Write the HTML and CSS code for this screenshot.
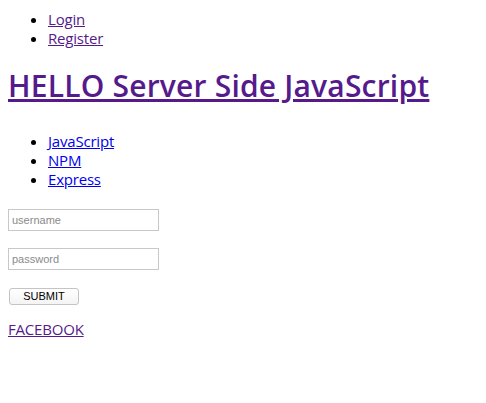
FILE: index.html
```html
<!DOCTYPE html>
<html lang="en">
<head>
<meta charset="utf-8">
<title>HELLO Server Side JavaScript</title>
<link rel="stylesheet" href="styles.css">
</head>
<body>
  <ul class="nav">
    <li><a class="visited" href="#login">Login</a></li>
    <li><a class="visited" href="#register">Register</a></li>
  </ul>
  <h1 class="title"><a class="visited" href="#home">HELLO Server Side JavaScript</a></h1>
  <ul class="topics">
    <li><a class="link" href="#js">JavaScript</a></li>
    <li><a class="link" href="#npm">NPM</a></li>
    <li><a class="link" href="#express">Express</a></li>
  </ul>
  <form class="login-form" onsubmit="return false">
    <input class="field" type="text" name="username" placeholder="username">
    <input class="field" type="password" name="password" placeholder="password">
    <button class="submit" type="submit">SUBMIT</button>
  </form>
  <a class="visited fb" href="#facebook">FACEBOOK</a>
</body>
</html>
```

FILE: styles.css
```css
html, body {
  background: #ffffff;
}

body {
  margin: 0;
  padding: 10px 8px 0 8px;
  font-family: "Open Sans", "Noto Sans", sans-serif;
  font-size: 15px;
  letter-spacing: -0.2px;
  color: #000000;
}

a {
  text-decoration: underline;
}

.visited {
  color: #551a8b;
}

.link {
  color: #0000ee;
}

.nav,
.topics {
  margin: 0;
  padding-left: 40px;
  list-style: disc;
  line-height: 19px;
}

.title {
  margin: 18.4px 0 0 0;
  font-size: 30px;
  font-weight: 600;
  line-height: 40px;
  letter-spacing: 0.2px;
}

.topics {
  margin-top: 25.8px;
}

.login-form {
  display: flex;
  flex-direction: column;
  align-items: flex-start;
  margin-top: 20px;
}

.field {
  box-sizing: border-box;
  width: 151px;
  height: 22px;
  margin: 0 0 17px 0;
  padding: 0 3px;
  border: 1px solid #c8c8c8;
  border-radius: 0;
  font-family: "Liberation Sans", Arial, sans-serif;
  font-size: 11px;
  letter-spacing: 0;
  color: #000;
  background: #fff;
  outline: none;
}

.field::placeholder {
  color: #8a8a8a;
}

.field + .field {
  margin-bottom: 18px;
}

.submit {
  box-sizing: border-box;
  width: 70px;
  height: 17px;
  margin: 0 0 0 1px;
  padding: 0;
  border: 1px solid #c4c4c4;
  border-radius: 3px;
  background: linear-gradient(#ffffff, #f4f4f4);
  font-family: "Liberation Sans", Arial, sans-serif;
  font-size: 11px;
  letter-spacing: 0;
  line-height: 15px;
  color: #000;
}

.fb {
  display: block;
  width: max-content;
  margin-top: 15px;
  line-height: 19px;
}
```
